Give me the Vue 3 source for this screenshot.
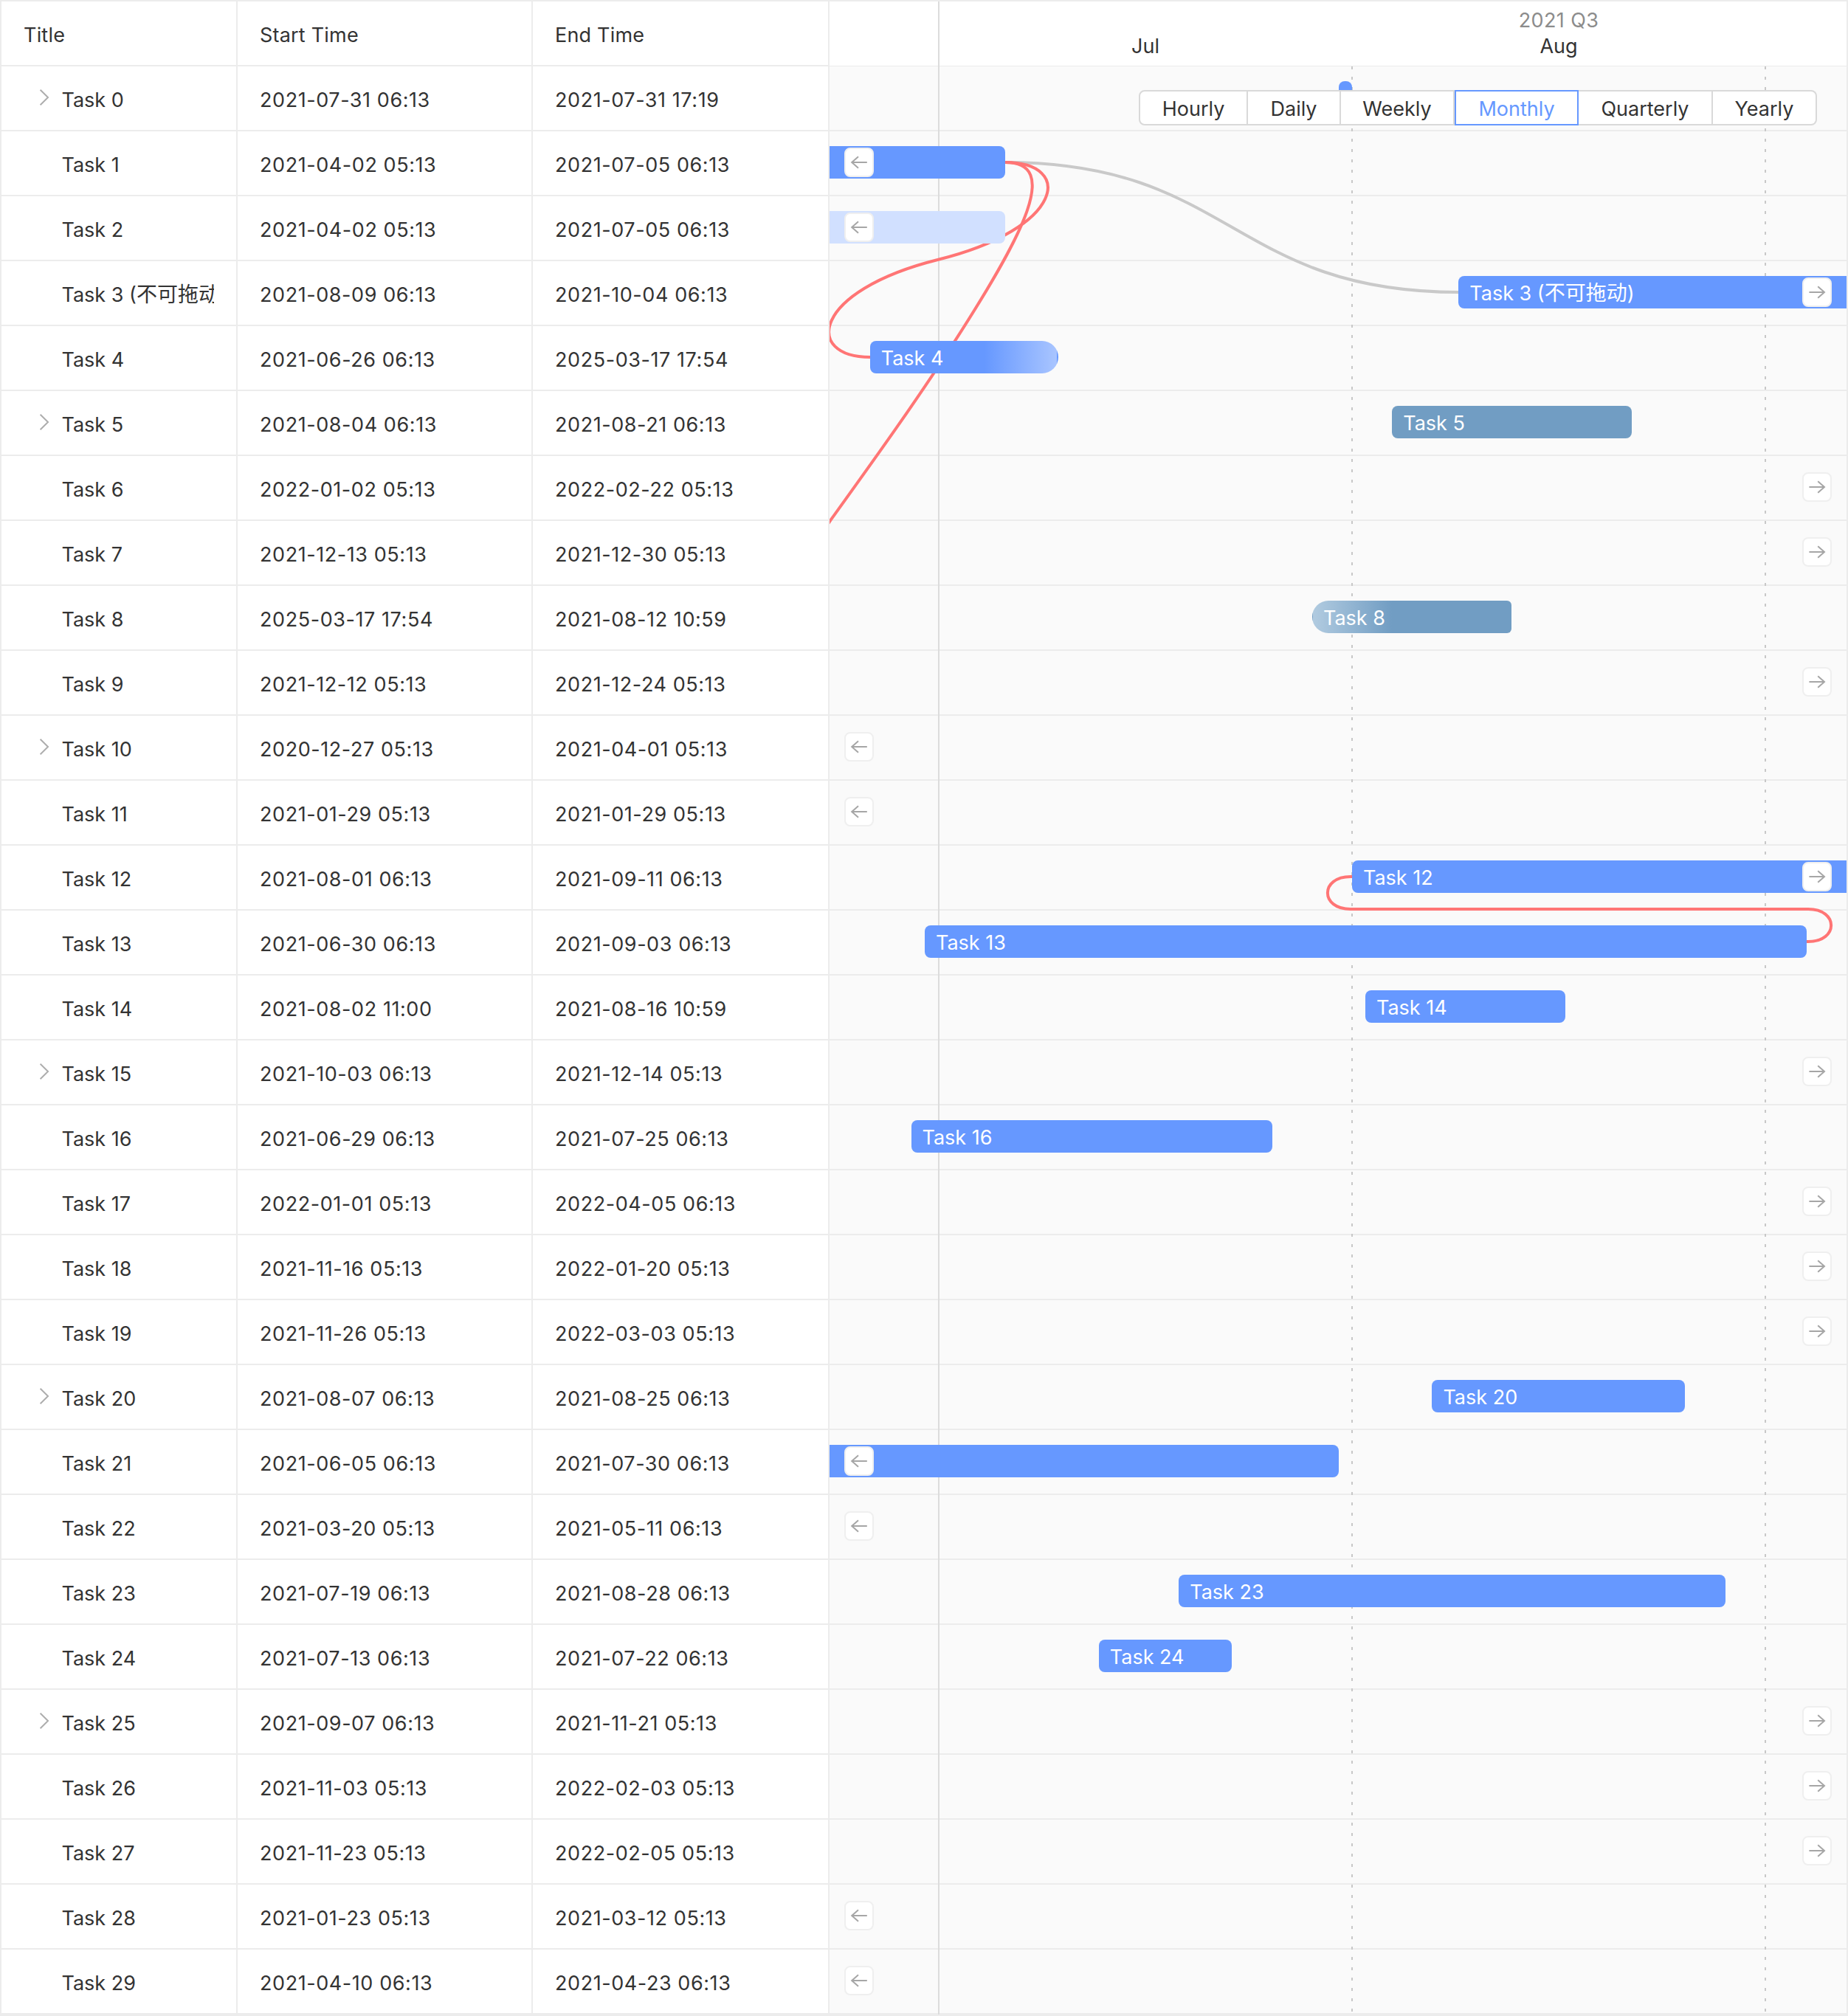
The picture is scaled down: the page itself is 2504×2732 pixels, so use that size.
<script setup>
// Bars are given in pixels of the timeline: [from, to] on the page's x axis.
const ORIGIN = 1124

const tasks = [
  { start: '2021-07-31 06:13', end: '2021-07-31 17:19', parent: true, bar: [1814, 1832], silent: true, tone: 'dot' },
  { start: '2021-04-02 05:13', end: '2021-07-05 06:13', bar: [1100, 1362.3], silent: true, before: true },
  { start: '2021-04-02 05:13', end: '2021-07-05 06:13', bar: [1100, 1362.3], silent: true, before: true, tone: 'pale' },
  { start: '2021-08-09 06:13', end: '2021-10-04 06:13', note: '不可拖动', bar: [1976.3, 2560], after: true },
  { start: '2021-06-26 06:13', end: '2025-03-17 17:54', bar: [1178.7, 1434], tone: 'open-end' },
  { start: '2021-08-04 06:13', end: '2021-08-21 06:13', parent: true, bar: [1886.2, 2211], tone: 'steel' },
  { start: '2022-01-02 05:13', end: '2022-02-22 05:13', after: true },
  { start: '2021-12-13 05:13', end: '2021-12-30 05:13', after: true },
  { start: '2025-03-17 17:54', end: '2021-08-12 10:59', bar: [1778, 2048], tone: 'open-start' },
  { start: '2021-12-12 05:13', end: '2021-12-24 05:13', after: true },
  { start: '2020-12-27 05:13', end: '2021-04-01 05:13', parent: true, before: true },
  { start: '2021-01-29 05:13', end: '2021-01-29 05:13', before: true },
  { start: '2021-08-01 06:13', end: '2021-09-11 06:13', bar: [1832, 2560], after: true },
  { start: '2021-06-30 06:13', end: '2021-09-03 06:13', bar: [1253, 2448] },
  { start: '2021-08-02 11:00', end: '2021-08-16 10:59', bar: [1850, 2121] },
  { start: '2021-10-03 06:13', end: '2021-12-14 05:13', parent: true, after: true },
  { start: '2021-06-29 06:13', end: '2021-07-25 06:13', bar: [1234.5, 1723.6] },
  { start: '2022-01-01 05:13', end: '2022-04-05 06:13', after: true },
  { start: '2021-11-16 05:13', end: '2022-01-20 05:13', after: true },
  { start: '2021-11-26 05:13', end: '2022-03-03 05:13', after: true },
  { start: '2021-08-07 06:13', end: '2021-08-25 06:13', parent: true, bar: [1940.4, 2283.4] },
  { start: '2021-06-05 06:13', end: '2021-07-30 06:13', bar: [1100, 1814], silent: true, before: true },
  { start: '2021-03-20 05:13', end: '2021-05-11 06:13', before: true },
  { start: '2021-07-19 06:13', end: '2021-08-28 06:13', bar: [1597.2, 2338] },
  { start: '2021-07-13 06:13', end: '2021-07-22 06:13', bar: [1488.8, 1669.4] },
  { start: '2021-09-07 06:13', end: '2021-11-21 05:13', parent: true, after: true },
  { start: '2021-11-03 05:13', end: '2022-02-03 05:13', after: true },
  { start: '2021-11-23 05:13', end: '2022-02-05 05:13', after: true },
  { start: '2021-01-23 05:13', end: '2021-03-12 05:13', before: true },
  { start: '2021-04-10 06:13', end: '2021-04-23 06:13', before: true },
]

const views = [
  { name: 'Hourly', width: 148 },
  { name: 'Daily', width: 126 },
  { name: 'Weekly', width: 154 },
  { name: 'Monthly', width: 168 },
  { name: 'Quarterly', width: 182 },
  { name: 'Yearly', width: 141 },
]

const barStyle = ([from, to]) => ({
  marginLeft: `${from - ORIGIN}px`,
  width: `${to - from}px`,
})
</script>

<template>
  <div class="gantt">
    <section class="table">
      <header class="line head">
        <div class="cell title">Title</div>
        <div class="cell start">Start Time</div>
        <div class="cell end">End Time</div>
      </header>
      <div v-for="(task, i) in tasks" :key="i" class="line">
        <div class="cell title">
          <span class="toggle">
            <svg v-if="task.parent" width="16" height="24" viewBox="0 0 16 24">
              <path d="M2.6 1.8 L13 12 L2.6 22.2" fill="none" stroke="#adadad" stroke-width="2" />
            </svg>
          </span>
          <span class="name">Task {{ i }}<template v-if="task.note"> (<span class="cjk">{{ task.note }}</span>)</template></span>
        </div>
        <div class="cell start date">{{ task.start }}</div>
        <div class="cell end date">{{ task.end }}</div>
      </div>
    </section>

    <section class="chart">
      <header class="axis">
        <span class="month july">Jul</span>
        <span class="month august"><span class="quarter">2021 Q3</span>Aug</span>
      </header>

      <div class="rows">
        <div v-for="(task, i) in tasks" :key="i" class="row">
          <div v-if="task.bar" class="bar" :class="task.tone" :style="barStyle(task.bar)">
            <template v-if="!task.silent">Task {{ i }}<template v-if="task.note"> (<span class="cjk">{{ task.note }}</span>)</template></template>
          </div>
          <button v-if="task.before" class="jump before">
            <svg width="36" height="36" viewBox="0 0 36 36">
              <path d="M28.8 18 H8.2 M17 10.2 L8.2 18 L17 25.8" />
            </svg>
          </button>
          <button v-if="task.after" class="jump after">
            <svg width="36" height="36" viewBox="0 0 36 36">
              <path d="M7.4 18 H28 M19.2 10.2 L28 18 L19.2 25.8" />
            </svg>
          </button>
        </div>
      </div>

      <i class="rule first"></i>
      <i class="rule dashed second"></i>
      <i class="rule dashed third"></i>

      <svg class="links" width="1378" height="2728" viewBox="1124 2 1378 2728">
        <path class="normal" d="M1362 220 C1669.5 220 1669.5 396 1977 396" />
        <path d="M1362 220 C1455 220 1443.5 309 1270.5 352 C1099 395 1089.5 484 1179 484" />
        <path d="M1362 220 C1437 220 1388.7 315 1293.7 462.4 C1237.7 549.4 1180 629 1124 707 L1110 727" />
        <path d="M2448 1276 H2450 C2491.5 1276 2491.5 1232 2450 1232 H1830 C1788.5 1232 1788.5 1188 1830 1188 H1832" />
      </svg>

      <nav class="views">
        <span
          v-for="view in views"
          :key="view.name"
          class="view"
          :class="{ active: view.name === 'Monthly' }"
          :style="{ width: `${view.width}px` }"
        >{{ view.name }}</span>
      </nav>
    </section>
  </div>
</template>

<style>
body {
  margin: 0;
  background: #fff;
}
</style>

<style scoped>
* {
  box-sizing: border-box;
}

.gantt {
  display: flex;
  width: 2504px;
  height: 2732px;
  border: 2px solid #ececec;
  background: #fff;
  color: #333;
  font: 27px/34px Inter, "Noto Sans CJK SC", sans-serif;
  white-space: nowrap;
  overflow: hidden;
}

.table {
  width: 1122px;
  flex: none;
}

.line {
  display: flex;
  height: 88px;
}

.cell {
  display: flex;
  align-items: center;
  height: 88px;
  padding: 5px 30px 0 30px;
  border-right: 2px solid #ececec;
  border-bottom: 2px solid #ececec;
}

.title { width: 320px; }
.start { width: 400px; }
.end { width: 402px; }

.head .cell { letter-spacing: 0.2px; }
.date { letter-spacing: 0.57px; }

.toggle {
  display: flex;
  flex: none;
  width: 51.5px;
  padding: 0 0 7px 20px;
}

.name {
  flex: 1;
  overflow: hidden;
}

.cjk {
  font-size: 28px;
  line-height: 1;
}

.chart {
  position: relative;
  width: 1378px;
  flex: none;
  background: #fafafa;
  overflow: hidden;
}

.axis {
  display: flex;
  align-items: flex-end;
  height: 88px;
  padding: 0 0 9px 148px;
  border-bottom: 1px solid #ececec;
  background: #fff;
}

.month {
  display: flex;
  flex-direction: column;
  align-items: center;
  width: 560px;
}

.quarter {
  color: #8c8c8c;
  letter-spacing: 0.4px;
  margin-bottom: 1px;
}

.row {
  position: relative;
  display: flex;
  height: 88px;
  padding-top: 20px;
  border-bottom: 2px solid #ececec;
}

.bar {
  position: relative;
  z-index: 2;
  flex: none;
  height: 44px;
  padding-left: 15px;
  border-radius: 8px;
  background: #6698ff;
  color: #fff;
  line-height: 48px;
}

.bar.dot {
  padding: 0;
  border-radius: 8px;
}

.bar.pale { background: #d1e0ff; }
.bar.steel { background: #719dc3; }

.bar.open-end {
  border-radius: 8px 22px 22px 8px;
  background: linear-gradient(to right, #6698ff 155px, #a9c5ff 253px, #6698ff 253px);
}

.bar.open-start {
  border-radius: 22px 6px 6px 22px;
  background: linear-gradient(to left, #719dc3 162px, #b1cbe0 269px, #719dc3 269px);
}

.jump {
  position: absolute;
  top: 22px;
  z-index: 3;
  width: 40px;
  height: 40px;
  padding: 0;
  border: 2px solid #efefef;
  border-radius: 8px;
  background: #fff;
}

.jump.before { left: 20px; }
.jump.after { right: 20px; }

.jump svg {
  display: block;
  fill: none;
  stroke: #a6a6a6;
  stroke-width: 2;
}

.rule {
  position: absolute;
  top: 0;
  bottom: 0;
  z-index: 1;
  width: 2px;
}

.rule.first {
  left: 147px;
  background: #dcdcdc;
}

.rule.dashed {
  top: 88px;
  background: repeating-linear-gradient(to bottom, #c8c8c8 0 4px, transparent 4px 14px);
}

.rule.second { left: 707px; }
.rule.third { left: 1267px; }

.links {
  position: absolute;
  top: 0;
  left: 0;
  z-index: 1;
  fill: none;
  stroke: #ff7575;
  stroke-width: 4;
}

.links .normal { stroke: #c9c9c9; }

.views {
  position: absolute;
  top: 120px;
  right: 40px;
  z-index: 4;
  display: flex;
  height: 48px;
}

.view {
  height: 48px;
  border: solid #d9d9d9;
  border-width: 2px 2px 2px 0;
  background: #fff;
  line-height: 48px;
  text-align: center;
}

.view:first-child {
  border-left-width: 2px;
  border-radius: 8px 0 0 8px;
}

.view:last-child {
  border-radius: 0 8px 8px 0;
}

.view.active {
  border-color: #6698ff;
  border-left-width: 2px;
  color: #6698ff;
}
</style>
